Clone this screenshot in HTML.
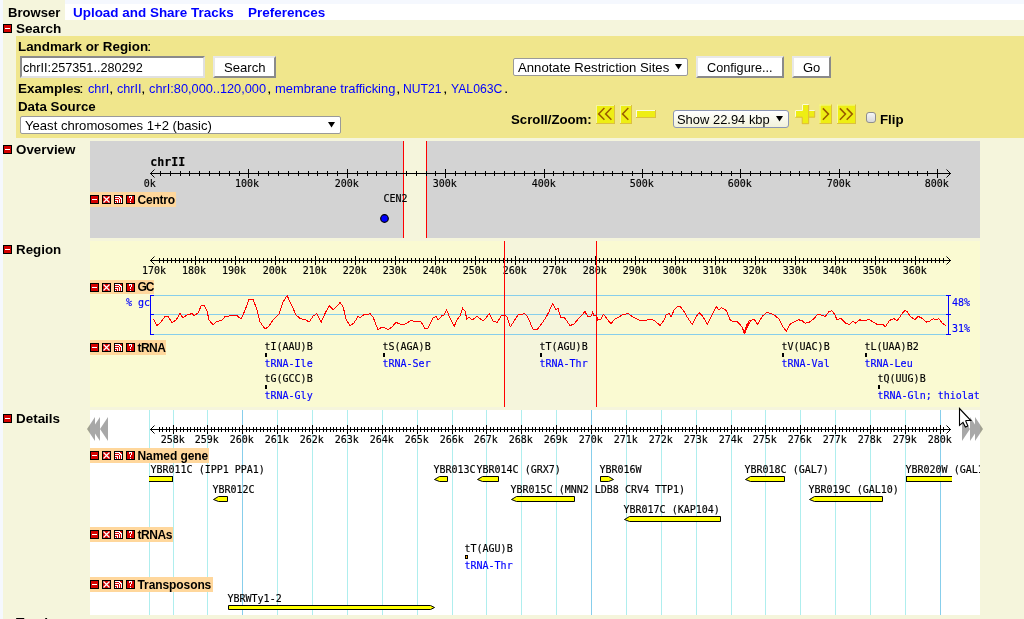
<!DOCTYPE html>
<html><head><meta charset="utf-8"><title>GBrowse</title>
<style>
html,body{margin:0;padding:0}
body{width:1024px;height:619px;overflow:hidden;position:relative;background:#f5f8fe;font-family:"Liberation Sans",Arial,sans-serif;font-size:13px;color:#000}
.abs,.ic,.tl,.tlt,.sec,span.t,div.p{position:absolute}
.ic{width:9px;height:9px;line-height:0}
.ic svg{display:block}
.tl{background:#ffd79c}
.tlt{font-weight:bold;font-size:12px;white-space:nowrap}
.sec{font-weight:bold;font-size:13.15px;line-height:15px;white-space:nowrap}
.t{white-space:nowrap;line-height:15px}
a{color:#0000ff;text-decoration:none}
.b,b{font-weight:bold;font-size:13.15px}
.btn{position:absolute;box-sizing:border-box;background:#fff;border:2px solid;border-color:#e8e8e8 #8a8a8a #8a8a8a #e8e8e8;font-size:13px;height:22px}
.sel{position:absolute;box-sizing:border-box;background:#fff;border:1px solid #9a9a9a;border-radius:2px;font-size:13px;line-height:16px;height:18px;padding-left:3.5px;white-space:nowrap}
.sel i{position:absolute;right:5px;top:0;font-style:normal;font-size:11px;letter-spacing:0}
svg text{font-family:"DejaVu Sans Mono","Liberation Mono",monospace;font-size:10px;stroke:currentColor;stroke-width:0.15px;fill:currentColor;color:#000}
</style></head><body><div id="w" style="position:absolute;left:0;top:0;width:1024px;height:619px;overflow:hidden;will-change:transform">

<div class="p" style="left:3px;top:0;width:1021px;height:619px;background:#f5f5dc"></div>
<div class="p" style="left:65px;top:0;width:959px;height:4px;background:#f5f8fe"></div>
<div class="p" style="left:65px;top:4px;width:959px;height:16px;background:#fff"></div>
<span class="t" style="left:7.73px;top:5px;font-size:13.5px;transform:scaleX(0.9676);transform-origin:0 0;font-weight:bold">Browser</span>
<span class="t" style="left:73.39px;top:5px;font-size:13.5px;transform:scaleX(0.9957);transform-origin:0 0;font-weight:bold;color:#0000ff">Upload and Share Tracks</span>
<span class="t" style="left:247.80px;top:5px;font-size:13.5px;transform:scaleX(0.9981);transform-origin:0 0;font-weight:bold;color:#0000ff">Preferences</span>
<span class="ic" style="left:3px;top:24px"><svg width="9" height="9" viewBox="0 0 9 9" shape-rendering="crispEdges"><rect x="0" y="0" width="9" height="9" fill="#000"/><rect x="1" y="1" width="7" height="7" fill="#d40000"/><rect x="2" y="4" width="5" height="1" fill="#fff"/></svg></span><span class="t" style="left:16.41px;top:21px;font-size:13.5px;transform:scaleX(1.0045);transform-origin:0 0;font-weight:bold">Search</span>
<div class="p" style="left:16px;top:36px;width:1008px;height:102px;background:#f0e68c"></div>
<span class="t" style="left:17.90px;top:39px;font-size:13.5px;transform:scaleX(0.9913);transform-origin:0 0;font-weight:bold">Landmark or Region</span>
<span class="t" style="left:147.16px;top:39px;font-size:13.5px;transform:scaleX(1.1670);transform-origin:0 0">:</span>
<div class="abs" style="position:absolute;left:20px;top:56px;width:185px;height:22px;box-sizing:border-box;background:#fff;border:2px solid;border-color:#8a8a8a #e0e0e0 #e0e0e0 #8a8a8a;"></div>
<span class="t" style="left:23.16px;top:60px;font-size:13.5px;transform:scaleX(0.9379);transform-origin:0 0">chrII:257351..280292</span>
<div class="btn" style="left:213px;top:56px;width:63px"></div>
<span class="t" style="left:224.00px;top:60px;font-size:13.5px;transform:scaleX(0.9713);transform-origin:0 0">Search</span>
<span class="t" style="left:17.90px;top:81px;font-size:13.5px;transform:scaleX(0.9971);transform-origin:0 0;font-weight:bold">Examples</span>
<span class="t" style="left:79.37px;top:81px;font-size:13.5px;transform:scaleX(1.2447);transform-origin:0 0">:</span>
<span class="t" style="left:88.16px;top:81px;font-size:13.5px;transform:scaleX(0.9427);transform-origin:0 0;color:#0000ff">chrI</span>
<span class="t" style="left:117.06px;top:81px;font-size:13.5px;transform:scaleX(0.9371);transform-origin:0 0;color:#0000ff">chrII</span>
<span class="t" style="left:149.26px;top:81px;font-size:13.5px;transform:scaleX(0.9450);transform-origin:0 0;color:#0000ff">chrI:80,000..120,000</span>
<span class="t" style="left:274.84px;top:81px;font-size:13.5px;transform:scaleX(0.9567);transform-origin:0 0;color:#0000ff">membrane trafficking</span>
<span class="t" style="left:403.01px;top:81px;font-size:13.5px;transform:scaleX(0.8977);transform-origin:0 0;color:#0000ff">NUT21</span>
<span class="t" style="left:450.73px;top:81px;font-size:13.5px;transform:scaleX(0.9038);transform-origin:0 0;color:#0000ff">YAL063C</span>
<span class="t" style="left:109.24px;top:81px;font-size:13.5px;transform:scaleX(1.2076);transform-origin:0 0">,</span>
<span class="t" style="left:141.44px;top:81px;font-size:13.5px;transform:scaleX(1.2076);transform-origin:0 0">,</span>
<span class="t" style="left:266.84px;top:81px;font-size:13.5px;transform:scaleX(1.2076);transform-origin:0 0">,</span>
<span class="t" style="left:395.54px;top:81px;font-size:13.5px;transform:scaleX(1.2076);transform-origin:0 0">,</span>
<span class="t" style="left:442.54px;top:81px;font-size:13.5px;transform:scaleX(1.2076);transform-origin:0 0">,</span>
<span class="t" style="left:503.56px;top:81px;font-size:13.5px;transform:scaleX(1.1670);transform-origin:0 0">.</span>
<span class="t" style="left:17.91px;top:99px;font-size:13.5px;transform:scaleX(0.9869);transform-origin:0 0;font-weight:bold">Data Source</span>
<div class="sel" style="left:20px;top:116px;width:321px"></div><svg style="position:absolute;left:327.5px;top:122px" width="7" height="6" viewBox="0 0 7 6"><path d="M0 0H7L3.5 5.6Z" fill="#000"/></svg>
<span class="t" style="left:24.61px;top:118px;font-size:13.5px;transform:scaleX(0.9698);transform-origin:0 0">Yeast chromosomes 1+2 (basic)</span>
<div class="sel" style="left:513px;top:58px;width:175px"></div><svg style="position:absolute;left:674.5px;top:64px" width="7" height="6" viewBox="0 0 7 6"><path d="M0 0H7L3.5 5.6Z" fill="#000"/></svg>
<span class="t" style="left:517.57px;top:60px;font-size:13.5px;transform:scaleX(0.9734);transform-origin:0 0">Annotate Restriction Sites</span>
<div class="btn" style="left:696px;top:56px;width:88px"></div>
<span class="t" style="left:706.96px;top:60px;font-size:13.5px;transform:scaleX(0.9386);transform-origin:0 0">Configure...</span>
<div class="btn" style="left:792px;top:56px;width:39px"></div>
<span class="t" style="left:802.85px;top:60px;font-size:13.5px;transform:scaleX(0.9605);transform-origin:0 0">Go</span>
<span class="t" style="left:510.92px;top:112px;font-size:13.5px;transform:scaleX(0.9788);transform-origin:0 0;font-weight:bold">Scroll/Zoom:</span>
<svg class="abs" style="position:absolute;left:595px;top:104px" width="70" height="21" viewBox="0 0 70 21"><rect x="1" y="1" width="19" height="19" fill="#eeee14"/><rect x="1" y="1" width="19" height="1" fill="#f6f6a0"/><rect x="1" y="1" width="1" height="19" fill="#f6f6a0"/><rect x="1" y="19" width="19" height="1" fill="#dcc040"/><rect x="19" y="1" width="1" height="19" fill="#dcc040"/><path d="M8.9 4.5L3.6 9.9L8.9 15.3M15.9 4.5L10.6 9.9L15.9 15.3" stroke="#9a5c00" stroke-width="1.5" fill="none" stroke-linecap="square"/><rect x="25" y="1" width="12" height="19" fill="#eeee14"/><rect x="25" y="1" width="12" height="1" fill="#f6f6a0"/><rect x="25" y="1" width="1" height="19" fill="#f6f6a0"/><rect x="25" y="19" width="12" height="1" fill="#dcc040"/><rect x="36" y="1" width="1" height="19" fill="#dcc040"/><path d="M32.8 4.5L27.5 9.9L32.8 15.3" stroke="#9a5c00" stroke-width="1.5" fill="none" stroke-linecap="square"/><rect x="41" y="6" width="20" height="8" fill="#eeee14"/><rect x="41" y="6" width="20" height="1" fill="#fdfde0"/><rect x="41" y="6" width="1" height="8" fill="#fdfde0"/><rect x="41" y="13" width="20" height="1" fill="#dcc040"/><rect x="60" y="6" width="1" height="8" fill="#dcc040"/></svg>
<div class="sel" style="left:673px;top:110px;width:116px;border-radius:3px;border-color:#8c96b4;background:linear-gradient(#ffffff,#f2f2da)"></div><svg style="position:absolute;left:775.7px;top:116px" width="7" height="6" viewBox="0 0 7 6"><path d="M0 0H7L3.5 5.6Z" fill="#000"/></svg>
<span class="t" style="left:677.01px;top:112px;font-size:13.5px;transform:scaleX(0.9578);transform-origin:0 0">Show 22.94 kbp</span>
<svg class="abs" style="position:absolute;left:795px;top:104px" width="62" height="21" viewBox="0 0 62 21"><rect x="0" y="6" width="20" height="7.5" fill="#eeee14"/><rect x="7" y="0" width="7" height="20" fill="#eeee14"/><path d="M0.5 13V6.5H7.5V0.5H14M14 6.5H20" stroke="#fbfbd8" stroke-width="1" fill="none"/><path d="M0.5 13.2H7.2V19.7H13.7V0.8M13.7 13.2H19.7V6.8" stroke="#dcb440" stroke-width="0.9" fill="none"/><rect x="24.5" y="0.5" width="12.5" height="19.5" fill="#eeee14"/><rect x="24.5" y="0.5" width="12.5" height="1" fill="#f6f6a0"/><rect x="24.5" y="0.5" width="1" height="19.5" fill="#f6f6a0"/><rect x="24.5" y="19.0" width="12.5" height="1" fill="#dcc040"/><rect x="36.0" y="0.5" width="1" height="19.5" fill="#dcc040"/><path d="M28.4 4.9L33.5 10.1L28.4 15.3" stroke="#9a5c00" stroke-width="1.5" fill="none" stroke-linecap="square"/><rect x="42" y="0.5" width="19" height="19.5" fill="#eeee14"/><rect x="42" y="0.5" width="19" height="1" fill="#f6f6a0"/><rect x="42" y="0.5" width="1" height="19.5" fill="#f6f6a0"/><rect x="42" y="19.0" width="19" height="1" fill="#dcc040"/><rect x="60" y="0.5" width="1" height="19.5" fill="#dcc040"/><path d="M45.4 4.9L50.5 10.1L45.4 15.3M52.2 4.9L57.3 10.1L52.2 15.3" stroke="#9a5c00" stroke-width="1.5" fill="none" stroke-linecap="square"/></svg>
<div class="abs" style="position:absolute;left:865.5px;top:112px;width:10.5px;height:10.5px;box-sizing:border-box;border:1px solid #8e8e8e;border-radius:3px;background:linear-gradient(#f6f6f6,#d8d8d8)"></div>
<span class="t" style="left:879.91px;top:112px;font-size:13.5px;transform:scaleX(0.9850);transform-origin:0 0;font-weight:bold">Flip</span>
<span class="ic" style="left:3px;top:145px"><svg width="9" height="9" viewBox="0 0 9 9" shape-rendering="crispEdges"><rect x="0" y="0" width="9" height="9" fill="#000"/><rect x="1" y="1" width="7" height="7" fill="#d40000"/><rect x="2" y="4" width="5" height="1" fill="#fff"/></svg></span><span class="t" style="left:16.25px;top:142px;font-size:13.5px;transform:scaleX(0.9897);transform-origin:0 0;font-weight:bold">Overview</span>
<svg class="abs" style="position:absolute;left:90px;top:141px" width="890" height="97" viewBox="90 141 890 97"><rect x="90" y="141" width="890" height="97" fill="#d3d3d3"/><rect x="404" y="141" width="22" height="97" fill="#f5f5dc"/><g shape-rendering="crispEdges"><rect x="403" y="141" width="1" height="97" fill="#ff0000"/><rect x="426" y="141" width="1" height="97" fill="#ff0000"/><rect x="150" y="173" width="801" height="1" fill="#000"/><rect x="160" y="171" width="1" height="5" fill="#000"/><rect x="170" y="171" width="1" height="5" fill="#000"/><rect x="180" y="171" width="1" height="5" fill="#000"/><rect x="189" y="171" width="1" height="5" fill="#000"/><rect x="199" y="171" width="1" height="5" fill="#000"/><rect x="209" y="171" width="1" height="5" fill="#000"/><rect x="219" y="171" width="1" height="5" fill="#000"/><rect x="229" y="171" width="1" height="5" fill="#000"/><rect x="239" y="171" width="1" height="5" fill="#000"/><rect x="248" y="169" width="1" height="9" fill="#000"/><rect x="258" y="171" width="1" height="5" fill="#000"/><rect x="268" y="171" width="1" height="5" fill="#000"/><rect x="278" y="171" width="1" height="5" fill="#000"/><rect x="288" y="171" width="1" height="5" fill="#000"/><rect x="298" y="171" width="1" height="5" fill="#000"/><rect x="308" y="171" width="1" height="5" fill="#000"/><rect x="317" y="171" width="1" height="5" fill="#000"/><rect x="327" y="171" width="1" height="5" fill="#000"/><rect x="337" y="171" width="1" height="5" fill="#000"/><rect x="347" y="169" width="1" height="9" fill="#000"/><rect x="357" y="171" width="1" height="5" fill="#000"/><rect x="367" y="171" width="1" height="5" fill="#000"/><rect x="376" y="171" width="1" height="5" fill="#000"/><rect x="386" y="171" width="1" height="5" fill="#000"/><rect x="396" y="171" width="1" height="5" fill="#000"/><rect x="406" y="171" width="1" height="5" fill="#000"/><rect x="416" y="171" width="1" height="5" fill="#000"/><rect x="426" y="171" width="1" height="5" fill="#000"/><rect x="435" y="171" width="1" height="5" fill="#000"/><rect x="445" y="169" width="1" height="9" fill="#000"/><rect x="455" y="171" width="1" height="5" fill="#000"/><rect x="465" y="171" width="1" height="5" fill="#000"/><rect x="475" y="171" width="1" height="5" fill="#000"/><rect x="485" y="171" width="1" height="5" fill="#000"/><rect x="494" y="171" width="1" height="5" fill="#000"/><rect x="504" y="171" width="1" height="5" fill="#000"/><rect x="514" y="171" width="1" height="5" fill="#000"/><rect x="524" y="171" width="1" height="5" fill="#000"/><rect x="534" y="171" width="1" height="5" fill="#000"/><rect x="544" y="169" width="1" height="9" fill="#000"/><rect x="553" y="171" width="1" height="5" fill="#000"/><rect x="563" y="171" width="1" height="5" fill="#000"/><rect x="573" y="171" width="1" height="5" fill="#000"/><rect x="583" y="171" width="1" height="5" fill="#000"/><rect x="593" y="171" width="1" height="5" fill="#000"/><rect x="603" y="171" width="1" height="5" fill="#000"/><rect x="612" y="171" width="1" height="5" fill="#000"/><rect x="622" y="171" width="1" height="5" fill="#000"/><rect x="632" y="171" width="1" height="5" fill="#000"/><rect x="642" y="169" width="1" height="9" fill="#000"/><rect x="652" y="171" width="1" height="5" fill="#000"/><rect x="662" y="171" width="1" height="5" fill="#000"/><rect x="672" y="171" width="1" height="5" fill="#000"/><rect x="681" y="171" width="1" height="5" fill="#000"/><rect x="691" y="171" width="1" height="5" fill="#000"/><rect x="701" y="171" width="1" height="5" fill="#000"/><rect x="711" y="171" width="1" height="5" fill="#000"/><rect x="721" y="171" width="1" height="5" fill="#000"/><rect x="731" y="171" width="1" height="5" fill="#000"/><rect x="740" y="169" width="1" height="9" fill="#000"/><rect x="750" y="171" width="1" height="5" fill="#000"/><rect x="760" y="171" width="1" height="5" fill="#000"/><rect x="770" y="171" width="1" height="5" fill="#000"/><rect x="780" y="171" width="1" height="5" fill="#000"/><rect x="790" y="171" width="1" height="5" fill="#000"/><rect x="799" y="171" width="1" height="5" fill="#000"/><rect x="809" y="171" width="1" height="5" fill="#000"/><rect x="819" y="171" width="1" height="5" fill="#000"/><rect x="829" y="171" width="1" height="5" fill="#000"/><rect x="839" y="169" width="1" height="9" fill="#000"/><rect x="849" y="171" width="1" height="5" fill="#000"/><rect x="858" y="171" width="1" height="5" fill="#000"/><rect x="868" y="171" width="1" height="5" fill="#000"/><rect x="878" y="171" width="1" height="5" fill="#000"/><rect x="888" y="171" width="1" height="5" fill="#000"/><rect x="898" y="171" width="1" height="5" fill="#000"/><rect x="908" y="171" width="1" height="5" fill="#000"/><rect x="917" y="171" width="1" height="5" fill="#000"/><rect x="927" y="171" width="1" height="5" fill="#000"/><rect x="937" y="169" width="1" height="9" fill="#000"/></g><path d="M154.5 169.5L150.5 173.5L154.5 177.5M946.5 169.5L950.5 173.5L946.5 177.5" stroke="#000" stroke-width="1" fill="none"/><text x="143.7" y="187">0k</text><text x="235.0" y="187">100k</text><text x="334.7" y="187">200k</text><text x="432.7" y="187">300k</text><text x="531.7" y="187">400k</text><text x="629.7" y="187">500k</text><text x="727.7" y="187">600k</text><text x="826.7" y="187">700k</text><text x="924.7" y="187">800k</text><text x="150.3" y="166" style="font-weight:bold;font-size:11.6px">chrII</text><text x="383.5" y="202">CEN2</text><circle cx="384.5" cy="218.5" r="3.8" fill="#0000ff" stroke="#000" stroke-width="1.2"/></svg>
<div class="tl" style="left:90px;top:192px;width:86px;height:15px"></div><span class="ic" style="left:90px;top:195px"><svg width="9" height="9" viewBox="0 0 9 9" shape-rendering="crispEdges"><rect x="0" y="0" width="9" height="9" fill="#000"/><rect x="1" y="1" width="7" height="7" fill="#d40000"/><rect x="2" y="4" width="5" height="1" fill="#fff"/></svg></span><span class="ic" style="left:102px;top:195px"><svg width="9" height="9" viewBox="0 0 9 9"><rect x="0" y="0" width="9" height="9" fill="#000"/><rect x="1" y="1" width="7" height="7" fill="#d40000"/><path d="M1.5 1.5L7.5 7.5M7.5 1.5L1.5 7.5" stroke="#fff" stroke-width="1.25" fill="none"/></svg></span><span class="ic" style="left:114px;top:195px"><svg width="9" height="9" viewBox="0 0 9 9" shape-rendering="crispEdges"><rect x="0" y="0" width="9" height="9" fill="#000"/><rect x="1" y="1" width="7" height="7" fill="#d40000"/><rect x="1" y="1" width="5" height="1" fill="#fff"/><rect x="5" y="2" width="2" height="1" fill="#fff"/><rect x="1" y="3" width="4" height="1" fill="#fff"/><rect x="6" y="3" width="2" height="1" fill="#fff"/><rect x="5" y="4" width="1" height="1" fill="#fff"/><rect x="7" y="4" width="1" height="1" fill="#fff"/><rect x="1" y="5" width="3" height="1" fill="#fff"/><rect x="5" y="5" width="1" height="1" fill="#fff"/><rect x="7" y="5" width="1" height="1" fill="#fff"/><rect x="3" y="6" width="1" height="1" fill="#fff"/><rect x="5" y="6" width="1" height="1" fill="#fff"/><rect x="7" y="6" width="1" height="1" fill="#fff"/><rect x="1" y="7" width="1" height="1" fill="#fff"/><rect x="3" y="7" width="1" height="1" fill="#fff"/><rect x="5" y="7" width="1" height="1" fill="#fff"/><rect x="7" y="7" width="1" height="1" fill="#fff"/></svg></span><span class="ic" style="left:126px;top:195px"><svg width="9" height="9" viewBox="0 0 9 9" shape-rendering="crispEdges"><rect x="0" y="0" width="9" height="9" fill="#000"/><rect x="1" y="1" width="7" height="7" fill="#d40000"/><rect x="3" y="1" width="3" height="1" fill="#fff"/><rect x="3" y="2" width="1" height="1" fill="#fff"/><rect x="5" y="2" width="1" height="1" fill="#fff"/><rect x="5" y="3" width="1" height="1" fill="#fff"/><rect x="4" y="4" width="1" height="1" fill="#fff"/><rect x="4" y="5" width="1" height="1" fill="#fff"/><rect x="4" y="7" width="1" height="1" fill="#fff"/></svg></span><span class="tlt" style="left:137.5px;top:193px;line-height:15px;letter-spacing:-0.228px">Centro</span>
<span class="ic" style="left:3px;top:245px"><svg width="9" height="9" viewBox="0 0 9 9" shape-rendering="crispEdges"><rect x="0" y="0" width="9" height="9" fill="#000"/><rect x="1" y="1" width="7" height="7" fill="#d40000"/><rect x="2" y="4" width="5" height="1" fill="#fff"/></svg></span><span class="t" style="left:15.91px;top:242px;font-size:13.5px;transform:scaleX(0.9885);transform-origin:0 0;font-weight:bold">Region</span>
<svg class="abs" style="position:absolute;left:90px;top:241px" width="890" height="166" viewBox="90 241 890 166"><rect x="90" y="241" width="890" height="166" fill="#fafad2"/><rect x="505" y="241" width="91" height="166" fill="#f5f5dc"/><g shape-rendering="crispEdges"><rect x="150" y="260" width="801" height="1" fill="#000"/><rect x="159" y="258" width="1" height="5" fill="#000"/><rect x="163" y="258" width="1" height="5" fill="#000"/><rect x="167" y="258" width="1" height="5" fill="#000"/><rect x="171" y="258" width="1" height="5" fill="#000"/><rect x="175" y="258" width="1" height="5" fill="#000"/><rect x="179" y="258" width="1" height="5" fill="#000"/><rect x="183" y="258" width="1" height="5" fill="#000"/><rect x="187" y="258" width="1" height="5" fill="#000"/><rect x="191" y="258" width="1" height="5" fill="#000"/><rect x="195" y="256" width="1" height="9" fill="#000"/><rect x="199" y="258" width="1" height="5" fill="#000"/><rect x="203" y="258" width="1" height="5" fill="#000"/><rect x="207" y="258" width="1" height="5" fill="#000"/><rect x="211" y="258" width="1" height="5" fill="#000"/><rect x="215" y="258" width="1" height="5" fill="#000"/><rect x="219" y="258" width="1" height="5" fill="#000"/><rect x="223" y="258" width="1" height="5" fill="#000"/><rect x="227" y="258" width="1" height="5" fill="#000"/><rect x="231" y="258" width="1" height="5" fill="#000"/><rect x="235" y="256" width="1" height="9" fill="#000"/><rect x="239" y="258" width="1" height="5" fill="#000"/><rect x="243" y="258" width="1" height="5" fill="#000"/><rect x="247" y="258" width="1" height="5" fill="#000"/><rect x="251" y="258" width="1" height="5" fill="#000"/><rect x="255" y="258" width="1" height="5" fill="#000"/><rect x="259" y="258" width="1" height="5" fill="#000"/><rect x="263" y="258" width="1" height="5" fill="#000"/><rect x="267" y="258" width="1" height="5" fill="#000"/><rect x="271" y="258" width="1" height="5" fill="#000"/><rect x="275" y="256" width="1" height="9" fill="#000"/><rect x="279" y="258" width="1" height="5" fill="#000"/><rect x="283" y="258" width="1" height="5" fill="#000"/><rect x="287" y="258" width="1" height="5" fill="#000"/><rect x="291" y="258" width="1" height="5" fill="#000"/><rect x="295" y="258" width="1" height="5" fill="#000"/><rect x="299" y="258" width="1" height="5" fill="#000"/><rect x="303" y="258" width="1" height="5" fill="#000"/><rect x="307" y="258" width="1" height="5" fill="#000"/><rect x="311" y="258" width="1" height="5" fill="#000"/><rect x="315" y="256" width="1" height="9" fill="#000"/><rect x="319" y="258" width="1" height="5" fill="#000"/><rect x="323" y="258" width="1" height="5" fill="#000"/><rect x="327" y="258" width="1" height="5" fill="#000"/><rect x="331" y="258" width="1" height="5" fill="#000"/><rect x="335" y="258" width="1" height="5" fill="#000"/><rect x="339" y="258" width="1" height="5" fill="#000"/><rect x="343" y="258" width="1" height="5" fill="#000"/><rect x="347" y="258" width="1" height="5" fill="#000"/><rect x="351" y="258" width="1" height="5" fill="#000"/><rect x="355" y="256" width="1" height="9" fill="#000"/><rect x="359" y="258" width="1" height="5" fill="#000"/><rect x="363" y="258" width="1" height="5" fill="#000"/><rect x="367" y="258" width="1" height="5" fill="#000"/><rect x="371" y="258" width="1" height="5" fill="#000"/><rect x="375" y="258" width="1" height="5" fill="#000"/><rect x="379" y="258" width="1" height="5" fill="#000"/><rect x="383" y="258" width="1" height="5" fill="#000"/><rect x="387" y="258" width="1" height="5" fill="#000"/><rect x="391" y="258" width="1" height="5" fill="#000"/><rect x="395" y="256" width="1" height="9" fill="#000"/><rect x="399" y="258" width="1" height="5" fill="#000"/><rect x="403" y="258" width="1" height="5" fill="#000"/><rect x="407" y="258" width="1" height="5" fill="#000"/><rect x="411" y="258" width="1" height="5" fill="#000"/><rect x="415" y="258" width="1" height="5" fill="#000"/><rect x="419" y="258" width="1" height="5" fill="#000"/><rect x="423" y="258" width="1" height="5" fill="#000"/><rect x="427" y="258" width="1" height="5" fill="#000"/><rect x="431" y="258" width="1" height="5" fill="#000"/><rect x="435" y="256" width="1" height="9" fill="#000"/><rect x="439" y="258" width="1" height="5" fill="#000"/><rect x="443" y="258" width="1" height="5" fill="#000"/><rect x="447" y="258" width="1" height="5" fill="#000"/><rect x="451" y="258" width="1" height="5" fill="#000"/><rect x="455" y="258" width="1" height="5" fill="#000"/><rect x="459" y="258" width="1" height="5" fill="#000"/><rect x="463" y="258" width="1" height="5" fill="#000"/><rect x="467" y="258" width="1" height="5" fill="#000"/><rect x="471" y="258" width="1" height="5" fill="#000"/><rect x="475" y="256" width="1" height="9" fill="#000"/><rect x="479" y="258" width="1" height="5" fill="#000"/><rect x="483" y="258" width="1" height="5" fill="#000"/><rect x="487" y="258" width="1" height="5" fill="#000"/><rect x="491" y="258" width="1" height="5" fill="#000"/><rect x="495" y="258" width="1" height="5" fill="#000"/><rect x="499" y="258" width="1" height="5" fill="#000"/><rect x="503" y="258" width="1" height="5" fill="#000"/><rect x="507" y="258" width="1" height="5" fill="#000"/><rect x="511" y="258" width="1" height="5" fill="#000"/><rect x="515" y="256" width="1" height="9" fill="#000"/><rect x="519" y="258" width="1" height="5" fill="#000"/><rect x="523" y="258" width="1" height="5" fill="#000"/><rect x="527" y="258" width="1" height="5" fill="#000"/><rect x="531" y="258" width="1" height="5" fill="#000"/><rect x="535" y="258" width="1" height="5" fill="#000"/><rect x="539" y="258" width="1" height="5" fill="#000"/><rect x="543" y="258" width="1" height="5" fill="#000"/><rect x="547" y="258" width="1" height="5" fill="#000"/><rect x="551" y="258" width="1" height="5" fill="#000"/><rect x="555" y="256" width="1" height="9" fill="#000"/><rect x="559" y="258" width="1" height="5" fill="#000"/><rect x="563" y="258" width="1" height="5" fill="#000"/><rect x="567" y="258" width="1" height="5" fill="#000"/><rect x="571" y="258" width="1" height="5" fill="#000"/><rect x="575" y="258" width="1" height="5" fill="#000"/><rect x="579" y="258" width="1" height="5" fill="#000"/><rect x="583" y="258" width="1" height="5" fill="#000"/><rect x="587" y="258" width="1" height="5" fill="#000"/><rect x="591" y="258" width="1" height="5" fill="#000"/><rect x="595" y="256" width="1" height="9" fill="#000"/><rect x="599" y="258" width="1" height="5" fill="#000"/><rect x="603" y="258" width="1" height="5" fill="#000"/><rect x="607" y="258" width="1" height="5" fill="#000"/><rect x="611" y="258" width="1" height="5" fill="#000"/><rect x="615" y="258" width="1" height="5" fill="#000"/><rect x="619" y="258" width="1" height="5" fill="#000"/><rect x="623" y="258" width="1" height="5" fill="#000"/><rect x="627" y="258" width="1" height="5" fill="#000"/><rect x="631" y="258" width="1" height="5" fill="#000"/><rect x="635" y="256" width="1" height="9" fill="#000"/><rect x="639" y="258" width="1" height="5" fill="#000"/><rect x="643" y="258" width="1" height="5" fill="#000"/><rect x="647" y="258" width="1" height="5" fill="#000"/><rect x="651" y="258" width="1" height="5" fill="#000"/><rect x="655" y="258" width="1" height="5" fill="#000"/><rect x="659" y="258" width="1" height="5" fill="#000"/><rect x="663" y="258" width="1" height="5" fill="#000"/><rect x="667" y="258" width="1" height="5" fill="#000"/><rect x="671" y="258" width="1" height="5" fill="#000"/><rect x="675" y="256" width="1" height="9" fill="#000"/><rect x="679" y="258" width="1" height="5" fill="#000"/><rect x="683" y="258" width="1" height="5" fill="#000"/><rect x="687" y="258" width="1" height="5" fill="#000"/><rect x="691" y="258" width="1" height="5" fill="#000"/><rect x="695" y="258" width="1" height="5" fill="#000"/><rect x="699" y="258" width="1" height="5" fill="#000"/><rect x="703" y="258" width="1" height="5" fill="#000"/><rect x="707" y="258" width="1" height="5" fill="#000"/><rect x="711" y="258" width="1" height="5" fill="#000"/><rect x="715" y="256" width="1" height="9" fill="#000"/><rect x="719" y="258" width="1" height="5" fill="#000"/><rect x="723" y="258" width="1" height="5" fill="#000"/><rect x="727" y="258" width="1" height="5" fill="#000"/><rect x="731" y="258" width="1" height="5" fill="#000"/><rect x="735" y="258" width="1" height="5" fill="#000"/><rect x="739" y="258" width="1" height="5" fill="#000"/><rect x="743" y="258" width="1" height="5" fill="#000"/><rect x="747" y="258" width="1" height="5" fill="#000"/><rect x="751" y="258" width="1" height="5" fill="#000"/><rect x="755" y="256" width="1" height="9" fill="#000"/><rect x="759" y="258" width="1" height="5" fill="#000"/><rect x="763" y="258" width="1" height="5" fill="#000"/><rect x="767" y="258" width="1" height="5" fill="#000"/><rect x="771" y="258" width="1" height="5" fill="#000"/><rect x="775" y="258" width="1" height="5" fill="#000"/><rect x="779" y="258" width="1" height="5" fill="#000"/><rect x="783" y="258" width="1" height="5" fill="#000"/><rect x="787" y="258" width="1" height="5" fill="#000"/><rect x="791" y="258" width="1" height="5" fill="#000"/><rect x="795" y="256" width="1" height="9" fill="#000"/><rect x="799" y="258" width="1" height="5" fill="#000"/><rect x="803" y="258" width="1" height="5" fill="#000"/><rect x="807" y="258" width="1" height="5" fill="#000"/><rect x="811" y="258" width="1" height="5" fill="#000"/><rect x="815" y="258" width="1" height="5" fill="#000"/><rect x="819" y="258" width="1" height="5" fill="#000"/><rect x="823" y="258" width="1" height="5" fill="#000"/><rect x="827" y="258" width="1" height="5" fill="#000"/><rect x="831" y="258" width="1" height="5" fill="#000"/><rect x="835" y="256" width="1" height="9" fill="#000"/><rect x="839" y="258" width="1" height="5" fill="#000"/><rect x="843" y="258" width="1" height="5" fill="#000"/><rect x="847" y="258" width="1" height="5" fill="#000"/><rect x="851" y="258" width="1" height="5" fill="#000"/><rect x="855" y="258" width="1" height="5" fill="#000"/><rect x="859" y="258" width="1" height="5" fill="#000"/><rect x="863" y="258" width="1" height="5" fill="#000"/><rect x="867" y="258" width="1" height="5" fill="#000"/><rect x="871" y="258" width="1" height="5" fill="#000"/><rect x="875" y="256" width="1" height="9" fill="#000"/><rect x="879" y="258" width="1" height="5" fill="#000"/><rect x="883" y="258" width="1" height="5" fill="#000"/><rect x="887" y="258" width="1" height="5" fill="#000"/><rect x="891" y="258" width="1" height="5" fill="#000"/><rect x="895" y="258" width="1" height="5" fill="#000"/><rect x="899" y="258" width="1" height="5" fill="#000"/><rect x="903" y="258" width="1" height="5" fill="#000"/><rect x="907" y="258" width="1" height="5" fill="#000"/><rect x="911" y="258" width="1" height="5" fill="#000"/><rect x="915" y="256" width="1" height="9" fill="#000"/><rect x="919" y="258" width="1" height="5" fill="#000"/><rect x="923" y="258" width="1" height="5" fill="#000"/><rect x="927" y="258" width="1" height="5" fill="#000"/><rect x="931" y="258" width="1" height="5" fill="#000"/><rect x="935" y="258" width="1" height="5" fill="#000"/><rect x="939" y="258" width="1" height="5" fill="#000"/><rect x="943" y="258" width="1" height="5" fill="#000"/><rect x="151" y="295" width="797" height="1" fill="#87ceeb"/><rect x="151" y="314" width="797" height="1" fill="#87ceeb"/><rect x="151" y="334" width="797" height="1" fill="#87ceeb"/><rect x="150" y="295" width="1" height="40" fill="#0000ff"/><rect x="150" y="295" width="4" height="1" fill="#0000ff"/><rect x="150" y="334" width="4" height="1" fill="#0000ff"/><rect x="150" y="314" width="4" height="1" fill="#0000ff"/><rect x="948" y="295" width="1" height="40" fill="#0000ff"/><rect x="946" y="295" width="5" height="1" fill="#0000ff"/><rect x="946" y="334" width="5" height="1" fill="#0000ff"/><rect x="946" y="314" width="5" height="1" fill="#0000ff"/></g><path d="M154.5 256.5L150.5 260.5L154.5 264.5M946.5 256.5L950.5 260.5L946.5 264.5" stroke="#000" stroke-width="1" fill="none"/><text x="142.0" y="274">170k</text><text x="182.0" y="274">180k</text><text x="222.0" y="274">190k</text><text x="262.7" y="274">200k</text><text x="302.7" y="274">210k</text><text x="342.7" y="274">220k</text><text x="382.7" y="274">230k</text><text x="422.7" y="274">240k</text><text x="462.7" y="274">250k</text><text x="502.7" y="274">260k</text><text x="542.7" y="274">270k</text><text x="582.7" y="274">280k</text><text x="622.7" y="274">290k</text><text x="662.7" y="274">300k</text><text x="702.7" y="274">310k</text><text x="742.7" y="274">320k</text><text x="782.7" y="274">330k</text><text x="822.7" y="274">340k</text><text x="862.7" y="274">350k</text><text x="902.7" y="274">360k</text><polyline fill="none" stroke="#ff0000" stroke-width="1" shape-rendering="crispEdges" points="153.4,319.0 157.0,325.6 161.0,322.0 165.0,316.4 168.0,316.0 172.0,323.0 176.0,320.0 180.0,313.6 183.0,318.0 187.0,315.0 192.0,313.6 194.0,315.6 198.1,313.0 201.1,306.0 204.1,305.6 206.7,310.0 209.1,320.0 213.1,325.0 216.1,322.0 222.1,320.0 225.1,316.4 233.1,315.6 236.1,315.0 241.1,319.0 245.1,310.0 249.1,299.0 253.1,299.6 257.1,310.0 260.1,322.0 265.1,329.0 269.1,326.0 273.1,320.0 279.1,314.0 283.1,302.0 287.1,295.6 290.1,302.0 296.1,315.0 300.2,318.6 305.2,319.6 309.2,322.0 313.2,316.0 316.8,313.6 321.2,322.0 325.2,313.0 329.2,305.6 333.2,310.0 337.2,306.0 340.2,302.4 343.2,307.0 346.2,320.0 350.0,325.6 350.0,326.0 354.0,323.0 358.0,316.4 360.0,318.0 364.0,314.4 367.0,315.0 370.0,313.6 373.0,317.0 378.0,329.6 382.0,327.0 385.0,328.0 388.0,329.6 392.0,327.0 396.0,322.4 400.1,324.0 403.1,325.0 407.1,323.0 411.1,320.4 414.1,321.6 417.1,321.0 421.1,322.0 425.1,329.0 428.1,328.0 433.1,318.0 436.1,316.4 438.1,320.0 442.1,315.6 444.1,315.0 446.7,310.0 449.1,316.0 454.1,326.4 457.1,320.0 460.1,315.6 462.7,308.4 465.1,311.0 466.7,319.0 469.1,317.0 472.1,320.0 477.1,316.4 483.1,321.0 486.1,318.0 489.1,313.6 493.1,321.0 497.1,322.4 501.2,316.0 504.6,315.0 507.2,317.0 510.2,327.0 514.2,321.0 518.2,314.4 521.2,315.0 524.2,313.6 527.2,316.0 533.2,329.6 537.2,329.6 542.2,323.0 546.2,317.0 550.0,310.0 549.0,311.0 552.6,303.6 556.0,310.0 558.0,308.4 561.0,318.0 564.0,317.0 570.0,325.6 574.0,324.0 579.0,318.0 585.0,311.6 587.4,316.0 591.0,316.0 592.6,312.4 594.0,315.6 596.7,315.0 597.5,320.0 601.1,319.0 603.5,314.4 607.1,319.0 611.1,324.0 614.1,319.6 617.1,318.0 622.1,315.0 628.1,313.6 633.1,317.0 639.1,320.0 642.1,321.0 647.1,320.0 651.1,319.0 655.1,321.0 660.1,325.6 664.1,320.0 666.1,315.0 669.1,313.6 671.1,317.0 674.1,310.0 677.1,307.0 680.1,306.4 683.1,310.0 687.1,317.0 692.1,324.4 696.1,317.0 699.2,312.4 703.2,317.0 707.2,324.4 711.2,317.0 716.2,306.4 718.8,310.0 721.2,307.6 726.2,310.4 730.2,320.0 733.2,322.0 737.2,321.6 742.2,327.0 744.2,333.0 747.2,324.0 750.0,322.0 745.0,332.5 749.1,321.0 754.2,319.4 757.6,324.4 762.2,316.4 766.8,312.5 771.4,313.4 776.0,316.4 779.4,319.4 782.9,326.7 786.3,331.3 789.8,324.4 794.3,321.7 798.9,319.8 802.4,321.0 805.1,323.3 809.3,322.1 813.8,318.7 818.0,314.1 821.9,315.2 825.3,316.4 828.8,311.8 831.7,310.7 834.5,314.1 836.8,319.4 841.4,318.7 846.0,323.3 849.4,324.4 852.9,321.0 855.2,323.3 859.7,319.8 864.3,321.0 868.9,319.4 873.5,322.1 878.1,324.9 882.7,324.0 885.4,326.7 889.6,320.3 894.2,318.7 896.9,321.0 901.1,315.2 904.5,310.7 906.8,311.1 910.2,316.4 914.8,319.8 918.3,316.4 922.9,318.7 926.3,322.1 929.7,321.0 933.2,318.7 936.6,319.8 938.9,318.7 942.4,323.3 945.8,325.6"/><text x="126" y="306" style="color:#0000ff">% gc</text><text x="952" y="306" style="color:#0000ff">48%</text><text x="952" y="332" style="color:#0000ff">31%</text><text x="264.5" y="350">tI(AAU)B</text><rect x="265" y="353" width="2" height="4" fill="#000" shape-rendering="crispEdges"/><text x="264.5" y="367" style="color:#0000ff">tRNA-Ile</text><text x="264.5" y="382">tG(GCC)B</text><rect x="265" y="385" width="2" height="4" fill="#000" shape-rendering="crispEdges"/><text x="264.5" y="399" style="color:#0000ff">tRNA-Gly</text><text x="382.5" y="350">tS(AGA)B</text><rect x="383" y="353" width="2" height="4" fill="#000" shape-rendering="crispEdges"/><text x="382.5" y="367" style="color:#0000ff">tRNA-Ser</text><text x="539.5" y="350">tT(AGU)B</text><rect x="540" y="353" width="2" height="4" fill="#000" shape-rendering="crispEdges"/><text x="539.5" y="367" style="color:#0000ff">tRNA-Thr</text><text x="781.5" y="350">tV(UAC)B</text><rect x="782" y="353" width="2" height="4" fill="#000" shape-rendering="crispEdges"/><text x="781.5" y="367" style="color:#0000ff">tRNA-Val</text><text x="864.5" y="350">tL(UAA)B2</text><rect x="865" y="353" width="2" height="4" fill="#000" shape-rendering="crispEdges"/><text x="864.5" y="367" style="color:#0000ff">tRNA-Leu</text><text x="877.5" y="382">tQ(UUG)B</text><rect x="878" y="385" width="2" height="4" fill="#000" shape-rendering="crispEdges"/><text x="877.5" y="399" style="color:#0000ff">tRNA-Gln; thiolat</text><g shape-rendering="crispEdges"><rect x="504" y="241" width="1" height="166" fill="#ff0000"/><rect x="596" y="241" width="1" height="166" fill="#ff0000"/></g></svg>
<div class="tl" style="left:90px;top:280px;width:64px;height:14px"></div><span class="ic" style="left:90px;top:283px"><svg width="9" height="9" viewBox="0 0 9 9" shape-rendering="crispEdges"><rect x="0" y="0" width="9" height="9" fill="#000"/><rect x="1" y="1" width="7" height="7" fill="#d40000"/><rect x="2" y="4" width="5" height="1" fill="#fff"/></svg></span><span class="ic" style="left:102px;top:283px"><svg width="9" height="9" viewBox="0 0 9 9"><rect x="0" y="0" width="9" height="9" fill="#000"/><rect x="1" y="1" width="7" height="7" fill="#d40000"/><path d="M1.5 1.5L7.5 7.5M7.5 1.5L1.5 7.5" stroke="#fff" stroke-width="1.25" fill="none"/></svg></span><span class="ic" style="left:114px;top:283px"><svg width="9" height="9" viewBox="0 0 9 9" shape-rendering="crispEdges"><rect x="0" y="0" width="9" height="9" fill="#000"/><rect x="1" y="1" width="7" height="7" fill="#d40000"/><rect x="1" y="1" width="5" height="1" fill="#fff"/><rect x="5" y="2" width="2" height="1" fill="#fff"/><rect x="1" y="3" width="4" height="1" fill="#fff"/><rect x="6" y="3" width="2" height="1" fill="#fff"/><rect x="5" y="4" width="1" height="1" fill="#fff"/><rect x="7" y="4" width="1" height="1" fill="#fff"/><rect x="1" y="5" width="3" height="1" fill="#fff"/><rect x="5" y="5" width="1" height="1" fill="#fff"/><rect x="7" y="5" width="1" height="1" fill="#fff"/><rect x="3" y="6" width="1" height="1" fill="#fff"/><rect x="5" y="6" width="1" height="1" fill="#fff"/><rect x="7" y="6" width="1" height="1" fill="#fff"/><rect x="1" y="7" width="1" height="1" fill="#fff"/><rect x="3" y="7" width="1" height="1" fill="#fff"/><rect x="5" y="7" width="1" height="1" fill="#fff"/><rect x="7" y="7" width="1" height="1" fill="#fff"/></svg></span><span class="ic" style="left:126px;top:283px"><svg width="9" height="9" viewBox="0 0 9 9" shape-rendering="crispEdges"><rect x="0" y="0" width="9" height="9" fill="#000"/><rect x="1" y="1" width="7" height="7" fill="#d40000"/><rect x="3" y="1" width="3" height="1" fill="#fff"/><rect x="3" y="2" width="1" height="1" fill="#fff"/><rect x="5" y="2" width="1" height="1" fill="#fff"/><rect x="5" y="3" width="1" height="1" fill="#fff"/><rect x="4" y="4" width="1" height="1" fill="#fff"/><rect x="4" y="5" width="1" height="1" fill="#fff"/><rect x="4" y="7" width="1" height="1" fill="#fff"/></svg></span><span class="tlt" style="left:137.5px;top:280px;line-height:14px;letter-spacing:-1.200px">GC</span>
<div class="tl" style="left:90px;top:340px;width:76px;height:15px"></div><span class="ic" style="left:90px;top:343px"><svg width="9" height="9" viewBox="0 0 9 9" shape-rendering="crispEdges"><rect x="0" y="0" width="9" height="9" fill="#000"/><rect x="1" y="1" width="7" height="7" fill="#d40000"/><rect x="2" y="4" width="5" height="1" fill="#fff"/></svg></span><span class="ic" style="left:102px;top:343px"><svg width="9" height="9" viewBox="0 0 9 9"><rect x="0" y="0" width="9" height="9" fill="#000"/><rect x="1" y="1" width="7" height="7" fill="#d40000"/><path d="M1.5 1.5L7.5 7.5M7.5 1.5L1.5 7.5" stroke="#fff" stroke-width="1.25" fill="none"/></svg></span><span class="ic" style="left:114px;top:343px"><svg width="9" height="9" viewBox="0 0 9 9" shape-rendering="crispEdges"><rect x="0" y="0" width="9" height="9" fill="#000"/><rect x="1" y="1" width="7" height="7" fill="#d40000"/><rect x="1" y="1" width="5" height="1" fill="#fff"/><rect x="5" y="2" width="2" height="1" fill="#fff"/><rect x="1" y="3" width="4" height="1" fill="#fff"/><rect x="6" y="3" width="2" height="1" fill="#fff"/><rect x="5" y="4" width="1" height="1" fill="#fff"/><rect x="7" y="4" width="1" height="1" fill="#fff"/><rect x="1" y="5" width="3" height="1" fill="#fff"/><rect x="5" y="5" width="1" height="1" fill="#fff"/><rect x="7" y="5" width="1" height="1" fill="#fff"/><rect x="3" y="6" width="1" height="1" fill="#fff"/><rect x="5" y="6" width="1" height="1" fill="#fff"/><rect x="7" y="6" width="1" height="1" fill="#fff"/><rect x="1" y="7" width="1" height="1" fill="#fff"/><rect x="3" y="7" width="1" height="1" fill="#fff"/><rect x="5" y="7" width="1" height="1" fill="#fff"/><rect x="7" y="7" width="1" height="1" fill="#fff"/></svg></span><span class="ic" style="left:126px;top:343px"><svg width="9" height="9" viewBox="0 0 9 9" shape-rendering="crispEdges"><rect x="0" y="0" width="9" height="9" fill="#000"/><rect x="1" y="1" width="7" height="7" fill="#d40000"/><rect x="3" y="1" width="3" height="1" fill="#fff"/><rect x="3" y="2" width="1" height="1" fill="#fff"/><rect x="5" y="2" width="1" height="1" fill="#fff"/><rect x="5" y="3" width="1" height="1" fill="#fff"/><rect x="4" y="4" width="1" height="1" fill="#fff"/><rect x="4" y="5" width="1" height="1" fill="#fff"/><rect x="4" y="7" width="1" height="1" fill="#fff"/></svg></span><span class="tlt" style="left:137.5px;top:341px;line-height:15px;letter-spacing:-0.549px">tRNA</span>
<span class="ic" style="left:3px;top:414px"><svg width="9" height="9" viewBox="0 0 9 9" shape-rendering="crispEdges"><rect x="0" y="0" width="9" height="9" fill="#000"/><rect x="1" y="1" width="7" height="7" fill="#d40000"/><rect x="2" y="4" width="5" height="1" fill="#fff"/></svg></span><span class="t" style="left:15.90px;top:411px;font-size:13.5px;transform:scaleX(0.9950);transform-origin:0 0;font-weight:bold">Details</span>
<svg class="abs" style="position:absolute;left:87px;top:406px" width="937" height="213" viewBox="87 406 937 213"><rect x="90" y="410" width="890" height="205" fill="#ffffff"/><g shape-rendering="crispEdges"><rect x="149" y="410" width="1" height="205" fill="#afeeee"/><rect x="173" y="410" width="1" height="205" fill="#afeeee"/><rect x="207" y="410" width="1" height="205" fill="#afeeee"/><rect x="242" y="410" width="1" height="205" fill="#87ceeb"/><rect x="277" y="410" width="1" height="205" fill="#afeeee"/><rect x="312" y="410" width="1" height="205" fill="#afeeee"/><rect x="347" y="410" width="1" height="205" fill="#afeeee"/><rect x="382" y="410" width="1" height="205" fill="#afeeee"/><rect x="417" y="410" width="1" height="205" fill="#afeeee"/><rect x="452" y="410" width="1" height="205" fill="#afeeee"/><rect x="486" y="410" width="1" height="205" fill="#afeeee"/><rect x="521" y="410" width="1" height="205" fill="#afeeee"/><rect x="556" y="410" width="1" height="205" fill="#afeeee"/><rect x="591" y="410" width="1" height="205" fill="#87ceeb"/><rect x="626" y="410" width="1" height="205" fill="#afeeee"/><rect x="661" y="410" width="1" height="205" fill="#afeeee"/><rect x="696" y="410" width="1" height="205" fill="#afeeee"/><rect x="731" y="410" width="1" height="205" fill="#afeeee"/><rect x="765" y="410" width="1" height="205" fill="#afeeee"/><rect x="800" y="410" width="1" height="205" fill="#afeeee"/><rect x="835" y="410" width="1" height="205" fill="#afeeee"/><rect x="870" y="410" width="1" height="205" fill="#afeeee"/><rect x="905" y="410" width="1" height="205" fill="#afeeee"/><rect x="940" y="410" width="1" height="205" fill="#87ceeb"/><rect x="150" y="429" width="801" height="1" fill="#000"/><rect x="159" y="427" width="1" height="5" fill="#000"/><rect x="162" y="427" width="1" height="5" fill="#000"/><rect x="166" y="427" width="1" height="5" fill="#000"/><rect x="169" y="427" width="1" height="5" fill="#000"/><rect x="173" y="425" width="1" height="9" fill="#000"/><rect x="176" y="427" width="1" height="5" fill="#000"/><rect x="180" y="427" width="1" height="5" fill="#000"/><rect x="183" y="427" width="1" height="5" fill="#000"/><rect x="187" y="427" width="1" height="5" fill="#000"/><rect x="190" y="427" width="1" height="5" fill="#000"/><rect x="194" y="427" width="1" height="5" fill="#000"/><rect x="197" y="427" width="1" height="5" fill="#000"/><rect x="200" y="427" width="1" height="5" fill="#000"/><rect x="204" y="427" width="1" height="5" fill="#000"/><rect x="207" y="425" width="1" height="9" fill="#000"/><rect x="211" y="427" width="1" height="5" fill="#000"/><rect x="214" y="427" width="1" height="5" fill="#000"/><rect x="218" y="427" width="1" height="5" fill="#000"/><rect x="221" y="427" width="1" height="5" fill="#000"/><rect x="225" y="427" width="1" height="5" fill="#000"/><rect x="228" y="427" width="1" height="5" fill="#000"/><rect x="232" y="427" width="1" height="5" fill="#000"/><rect x="235" y="427" width="1" height="5" fill="#000"/><rect x="239" y="427" width="1" height="5" fill="#000"/><rect x="242" y="425" width="1" height="9" fill="#000"/><rect x="246" y="427" width="1" height="5" fill="#000"/><rect x="249" y="427" width="1" height="5" fill="#000"/><rect x="253" y="427" width="1" height="5" fill="#000"/><rect x="256" y="427" width="1" height="5" fill="#000"/><rect x="260" y="427" width="1" height="5" fill="#000"/><rect x="263" y="427" width="1" height="5" fill="#000"/><rect x="267" y="427" width="1" height="5" fill="#000"/><rect x="270" y="427" width="1" height="5" fill="#000"/><rect x="274" y="427" width="1" height="5" fill="#000"/><rect x="277" y="425" width="1" height="9" fill="#000"/><rect x="281" y="427" width="1" height="5" fill="#000"/><rect x="284" y="427" width="1" height="5" fill="#000"/><rect x="288" y="427" width="1" height="5" fill="#000"/><rect x="291" y="427" width="1" height="5" fill="#000"/><rect x="295" y="427" width="1" height="5" fill="#000"/><rect x="298" y="427" width="1" height="5" fill="#000"/><rect x="302" y="427" width="1" height="5" fill="#000"/><rect x="305" y="427" width="1" height="5" fill="#000"/><rect x="309" y="427" width="1" height="5" fill="#000"/><rect x="312" y="425" width="1" height="9" fill="#000"/><rect x="316" y="427" width="1" height="5" fill="#000"/><rect x="319" y="427" width="1" height="5" fill="#000"/><rect x="323" y="427" width="1" height="5" fill="#000"/><rect x="326" y="427" width="1" height="5" fill="#000"/><rect x="330" y="427" width="1" height="5" fill="#000"/><rect x="333" y="427" width="1" height="5" fill="#000"/><rect x="336" y="427" width="1" height="5" fill="#000"/><rect x="340" y="427" width="1" height="5" fill="#000"/><rect x="343" y="427" width="1" height="5" fill="#000"/><rect x="347" y="425" width="1" height="9" fill="#000"/><rect x="350" y="427" width="1" height="5" fill="#000"/><rect x="354" y="427" width="1" height="5" fill="#000"/><rect x="357" y="427" width="1" height="5" fill="#000"/><rect x="361" y="427" width="1" height="5" fill="#000"/><rect x="364" y="427" width="1" height="5" fill="#000"/><rect x="368" y="427" width="1" height="5" fill="#000"/><rect x="371" y="427" width="1" height="5" fill="#000"/><rect x="375" y="427" width="1" height="5" fill="#000"/><rect x="378" y="427" width="1" height="5" fill="#000"/><rect x="382" y="425" width="1" height="9" fill="#000"/><rect x="385" y="427" width="1" height="5" fill="#000"/><rect x="389" y="427" width="1" height="5" fill="#000"/><rect x="392" y="427" width="1" height="5" fill="#000"/><rect x="396" y="427" width="1" height="5" fill="#000"/><rect x="399" y="427" width="1" height="5" fill="#000"/><rect x="403" y="427" width="1" height="5" fill="#000"/><rect x="406" y="427" width="1" height="5" fill="#000"/><rect x="410" y="427" width="1" height="5" fill="#000"/><rect x="413" y="427" width="1" height="5" fill="#000"/><rect x="417" y="425" width="1" height="9" fill="#000"/><rect x="420" y="427" width="1" height="5" fill="#000"/><rect x="424" y="427" width="1" height="5" fill="#000"/><rect x="427" y="427" width="1" height="5" fill="#000"/><rect x="431" y="427" width="1" height="5" fill="#000"/><rect x="434" y="427" width="1" height="5" fill="#000"/><rect x="438" y="427" width="1" height="5" fill="#000"/><rect x="441" y="427" width="1" height="5" fill="#000"/><rect x="445" y="427" width="1" height="5" fill="#000"/><rect x="448" y="427" width="1" height="5" fill="#000"/><rect x="452" y="425" width="1" height="9" fill="#000"/><rect x="455" y="427" width="1" height="5" fill="#000"/><rect x="459" y="427" width="1" height="5" fill="#000"/><rect x="462" y="427" width="1" height="5" fill="#000"/><rect x="466" y="427" width="1" height="5" fill="#000"/><rect x="469" y="427" width="1" height="5" fill="#000"/><rect x="472" y="427" width="1" height="5" fill="#000"/><rect x="476" y="427" width="1" height="5" fill="#000"/><rect x="479" y="427" width="1" height="5" fill="#000"/><rect x="483" y="427" width="1" height="5" fill="#000"/><rect x="486" y="425" width="1" height="9" fill="#000"/><rect x="490" y="427" width="1" height="5" fill="#000"/><rect x="493" y="427" width="1" height="5" fill="#000"/><rect x="497" y="427" width="1" height="5" fill="#000"/><rect x="500" y="427" width="1" height="5" fill="#000"/><rect x="504" y="427" width="1" height="5" fill="#000"/><rect x="507" y="427" width="1" height="5" fill="#000"/><rect x="511" y="427" width="1" height="5" fill="#000"/><rect x="514" y="427" width="1" height="5" fill="#000"/><rect x="518" y="427" width="1" height="5" fill="#000"/><rect x="521" y="425" width="1" height="9" fill="#000"/><rect x="525" y="427" width="1" height="5" fill="#000"/><rect x="528" y="427" width="1" height="5" fill="#000"/><rect x="532" y="427" width="1" height="5" fill="#000"/><rect x="535" y="427" width="1" height="5" fill="#000"/><rect x="539" y="427" width="1" height="5" fill="#000"/><rect x="542" y="427" width="1" height="5" fill="#000"/><rect x="546" y="427" width="1" height="5" fill="#000"/><rect x="549" y="427" width="1" height="5" fill="#000"/><rect x="553" y="427" width="1" height="5" fill="#000"/><rect x="556" y="425" width="1" height="9" fill="#000"/><rect x="560" y="427" width="1" height="5" fill="#000"/><rect x="563" y="427" width="1" height="5" fill="#000"/><rect x="567" y="427" width="1" height="5" fill="#000"/><rect x="570" y="427" width="1" height="5" fill="#000"/><rect x="574" y="427" width="1" height="5" fill="#000"/><rect x="577" y="427" width="1" height="5" fill="#000"/><rect x="581" y="427" width="1" height="5" fill="#000"/><rect x="584" y="427" width="1" height="5" fill="#000"/><rect x="588" y="427" width="1" height="5" fill="#000"/><rect x="591" y="425" width="1" height="9" fill="#000"/><rect x="595" y="427" width="1" height="5" fill="#000"/><rect x="598" y="427" width="1" height="5" fill="#000"/><rect x="602" y="427" width="1" height="5" fill="#000"/><rect x="605" y="427" width="1" height="5" fill="#000"/><rect x="608" y="427" width="1" height="5" fill="#000"/><rect x="612" y="427" width="1" height="5" fill="#000"/><rect x="615" y="427" width="1" height="5" fill="#000"/><rect x="619" y="427" width="1" height="5" fill="#000"/><rect x="622" y="427" width="1" height="5" fill="#000"/><rect x="626" y="425" width="1" height="9" fill="#000"/><rect x="629" y="427" width="1" height="5" fill="#000"/><rect x="633" y="427" width="1" height="5" fill="#000"/><rect x="636" y="427" width="1" height="5" fill="#000"/><rect x="640" y="427" width="1" height="5" fill="#000"/><rect x="643" y="427" width="1" height="5" fill="#000"/><rect x="647" y="427" width="1" height="5" fill="#000"/><rect x="650" y="427" width="1" height="5" fill="#000"/><rect x="654" y="427" width="1" height="5" fill="#000"/><rect x="657" y="427" width="1" height="5" fill="#000"/><rect x="661" y="425" width="1" height="9" fill="#000"/><rect x="664" y="427" width="1" height="5" fill="#000"/><rect x="668" y="427" width="1" height="5" fill="#000"/><rect x="671" y="427" width="1" height="5" fill="#000"/><rect x="675" y="427" width="1" height="5" fill="#000"/><rect x="678" y="427" width="1" height="5" fill="#000"/><rect x="682" y="427" width="1" height="5" fill="#000"/><rect x="685" y="427" width="1" height="5" fill="#000"/><rect x="689" y="427" width="1" height="5" fill="#000"/><rect x="692" y="427" width="1" height="5" fill="#000"/><rect x="696" y="425" width="1" height="9" fill="#000"/><rect x="699" y="427" width="1" height="5" fill="#000"/><rect x="703" y="427" width="1" height="5" fill="#000"/><rect x="706" y="427" width="1" height="5" fill="#000"/><rect x="710" y="427" width="1" height="5" fill="#000"/><rect x="713" y="427" width="1" height="5" fill="#000"/><rect x="717" y="427" width="1" height="5" fill="#000"/><rect x="720" y="427" width="1" height="5" fill="#000"/><rect x="724" y="427" width="1" height="5" fill="#000"/><rect x="727" y="427" width="1" height="5" fill="#000"/><rect x="731" y="425" width="1" height="9" fill="#000"/><rect x="734" y="427" width="1" height="5" fill="#000"/><rect x="737" y="427" width="1" height="5" fill="#000"/><rect x="741" y="427" width="1" height="5" fill="#000"/><rect x="744" y="427" width="1" height="5" fill="#000"/><rect x="748" y="427" width="1" height="5" fill="#000"/><rect x="751" y="427" width="1" height="5" fill="#000"/><rect x="755" y="427" width="1" height="5" fill="#000"/><rect x="758" y="427" width="1" height="5" fill="#000"/><rect x="762" y="427" width="1" height="5" fill="#000"/><rect x="765" y="425" width="1" height="9" fill="#000"/><rect x="769" y="427" width="1" height="5" fill="#000"/><rect x="772" y="427" width="1" height="5" fill="#000"/><rect x="776" y="427" width="1" height="5" fill="#000"/><rect x="779" y="427" width="1" height="5" fill="#000"/><rect x="783" y="427" width="1" height="5" fill="#000"/><rect x="786" y="427" width="1" height="5" fill="#000"/><rect x="790" y="427" width="1" height="5" fill="#000"/><rect x="793" y="427" width="1" height="5" fill="#000"/><rect x="797" y="427" width="1" height="5" fill="#000"/><rect x="800" y="425" width="1" height="9" fill="#000"/><rect x="804" y="427" width="1" height="5" fill="#000"/><rect x="807" y="427" width="1" height="5" fill="#000"/><rect x="811" y="427" width="1" height="5" fill="#000"/><rect x="814" y="427" width="1" height="5" fill="#000"/><rect x="818" y="427" width="1" height="5" fill="#000"/><rect x="821" y="427" width="1" height="5" fill="#000"/><rect x="825" y="427" width="1" height="5" fill="#000"/><rect x="828" y="427" width="1" height="5" fill="#000"/><rect x="832" y="427" width="1" height="5" fill="#000"/><rect x="835" y="425" width="1" height="9" fill="#000"/><rect x="839" y="427" width="1" height="5" fill="#000"/><rect x="842" y="427" width="1" height="5" fill="#000"/><rect x="846" y="427" width="1" height="5" fill="#000"/><rect x="849" y="427" width="1" height="5" fill="#000"/><rect x="853" y="427" width="1" height="5" fill="#000"/><rect x="856" y="427" width="1" height="5" fill="#000"/><rect x="860" y="427" width="1" height="5" fill="#000"/><rect x="863" y="427" width="1" height="5" fill="#000"/><rect x="867" y="427" width="1" height="5" fill="#000"/><rect x="870" y="425" width="1" height="9" fill="#000"/><rect x="873" y="427" width="1" height="5" fill="#000"/><rect x="877" y="427" width="1" height="5" fill="#000"/><rect x="880" y="427" width="1" height="5" fill="#000"/><rect x="884" y="427" width="1" height="5" fill="#000"/><rect x="887" y="427" width="1" height="5" fill="#000"/><rect x="891" y="427" width="1" height="5" fill="#000"/><rect x="894" y="427" width="1" height="5" fill="#000"/><rect x="898" y="427" width="1" height="5" fill="#000"/><rect x="901" y="427" width="1" height="5" fill="#000"/><rect x="905" y="425" width="1" height="9" fill="#000"/><rect x="908" y="427" width="1" height="5" fill="#000"/><rect x="912" y="427" width="1" height="5" fill="#000"/><rect x="915" y="427" width="1" height="5" fill="#000"/><rect x="919" y="427" width="1" height="5" fill="#000"/><rect x="922" y="427" width="1" height="5" fill="#000"/><rect x="926" y="427" width="1" height="5" fill="#000"/><rect x="929" y="427" width="1" height="5" fill="#000"/><rect x="933" y="427" width="1" height="5" fill="#000"/><rect x="936" y="427" width="1" height="5" fill="#000"/><rect x="940" y="425" width="1" height="9" fill="#000"/><rect x="943" y="427" width="1" height="5" fill="#000"/></g><path d="M154.5 425.5L150.5 429.5L154.5 433.5M946.5 425.5L950.5 429.5L946.5 433.5" stroke="#000" stroke-width="1" fill="none"/><text x="160.7" y="443">258k</text><text x="194.7" y="443">259k</text><text x="229.7" y="443">260k</text><text x="264.7" y="443">261k</text><text x="299.7" y="443">262k</text><text x="334.7" y="443">263k</text><text x="369.7" y="443">264k</text><text x="404.7" y="443">265k</text><text x="439.7" y="443">266k</text><text x="473.7" y="443">267k</text><text x="508.7" y="443">268k</text><text x="543.7" y="443">269k</text><text x="578.7" y="443">270k</text><text x="613.7" y="443">271k</text><text x="648.7" y="443">272k</text><text x="683.7" y="443">273k</text><text x="718.7" y="443">274k</text><text x="752.7" y="443">275k</text><text x="787.7" y="443">276k</text><text x="822.7" y="443">277k</text><text x="857.7" y="443">278k</text><text x="892.7" y="443">279k</text><text x="927.7" y="443">280k</text><path d="M87 429L95 417V441ZM92 429L100 417V441ZM100 429L108 417V441Z" fill="#000" fill-opacity="0.34"/><path d="M983 429L975 417V441ZM978 429L970 417V441ZM970 429L962 417V441Z" fill="#000" fill-opacity="0.34"/><path d="M959.5 408.5V425.3L963 422.4L965.4 427L967.9 426L965.8 421.3L966 420.5H970.8Z" fill="#fff" stroke="#000" stroke-width="1.1" stroke-linejoin="miter"/><text x="150.5" y="473">YBR011C (IPP1 PPA1)</text><rect x="149" y="476" width="23" height="6" fill="#ffff00" shape-rendering="crispEdges"/><path d="M149 476.5H172.5V481.5H149" fill="none" stroke="#000" stroke-width="1" shape-rendering="crispEdges"/><text x="433.5" y="473">YBR013C</text><path d="M434.5 479.5L439.5 476.5H447.5V481.5H439.5Z" fill="#ffff00" stroke="#000" stroke-width="1"/><text x="476.5" y="473">YBR014C (GRX7)</text><path d="M477.5 479.5L482.5 476.5H498.5V481.5H482.5Z" fill="#ffff00" stroke="#000" stroke-width="1"/><text x="599.5" y="473">YBR016W</text><path d="M600.5 476.5H608.5L613.5 479.5L608.5 481.5H600.5Z" fill="#ffff00" stroke="#000" stroke-width="1"/><text x="744.5" y="473">YBR018C (GAL7)</text><path d="M745.5 479.5L750.5 476.5H784.5V481.5H750.5Z" fill="#ffff00" stroke="#000" stroke-width="1"/><text x="905.5" y="473">YBR020W (GAL1</text><rect x="906" y="476" width="46" height="6" fill="#ffff00" shape-rendering="crispEdges"/><path d="M952 476.5H906.5V481.5H952" fill="none" stroke="#000" stroke-width="1" shape-rendering="crispEdges"/><text x="212.5" y="493">YBR012C</text><path d="M213.5 499.5L218.5 496.5H227.5V501.5H218.5Z" fill="#ffff00" stroke="#000" stroke-width="1"/><text x="510.5" y="493">YBR015C (MNN2 LDB8 CRV4 TTP1)</text><path d="M511.5 499.5L516.5 496.5H574.5V501.5H516.5Z" fill="#ffff00" stroke="#000" stroke-width="1"/><text x="808.5" y="493">YBR019C (GAL10)</text><path d="M809.5 499.5L814.5 496.5H882.5V501.5H814.5Z" fill="#ffff00" stroke="#000" stroke-width="1"/><text x="623.5" y="513">YBR017C (KAP104)</text><path d="M624.5 519.5L629.5 516.5H720.5V521.5H629.5Z" fill="#ffff00" stroke="#000" stroke-width="1"/><text x="464.5" y="552">tT(AGU)B</text><rect x="465" y="555" width="3" height="4" fill="#000" shape-rendering="crispEdges"/><rect x="466" y="556" width="1" height="2" fill="#ffa500" shape-rendering="crispEdges"/><text x="464.5" y="569" style="color:#0000ff">tRNA-Thr</text><text x="227.5" y="602">YBRWTy1-2</text><path d="M228.5 605.5H430.5L434.5 607.5L430.5 609.5H228.5Z" fill="#ffff00" stroke="#000" stroke-width="1"/><rect x="980" y="410" width="44" height="205" fill="#f5f5dc"/><path d="M980 424.5L983 429L980 433.5Z" fill="#000" fill-opacity="0.34"/></svg>
<div class="tl" style="left:90px;top:448px;width:119px;height:15px"></div><span class="ic" style="left:90px;top:451px"><svg width="9" height="9" viewBox="0 0 9 9" shape-rendering="crispEdges"><rect x="0" y="0" width="9" height="9" fill="#000"/><rect x="1" y="1" width="7" height="7" fill="#d40000"/><rect x="2" y="4" width="5" height="1" fill="#fff"/></svg></span><span class="ic" style="left:102px;top:451px"><svg width="9" height="9" viewBox="0 0 9 9"><rect x="0" y="0" width="9" height="9" fill="#000"/><rect x="1" y="1" width="7" height="7" fill="#d40000"/><path d="M1.5 1.5L7.5 7.5M7.5 1.5L1.5 7.5" stroke="#fff" stroke-width="1.25" fill="none"/></svg></span><span class="ic" style="left:114px;top:451px"><svg width="9" height="9" viewBox="0 0 9 9" shape-rendering="crispEdges"><rect x="0" y="0" width="9" height="9" fill="#000"/><rect x="1" y="1" width="7" height="7" fill="#d40000"/><rect x="1" y="1" width="5" height="1" fill="#fff"/><rect x="5" y="2" width="2" height="1" fill="#fff"/><rect x="1" y="3" width="4" height="1" fill="#fff"/><rect x="6" y="3" width="2" height="1" fill="#fff"/><rect x="5" y="4" width="1" height="1" fill="#fff"/><rect x="7" y="4" width="1" height="1" fill="#fff"/><rect x="1" y="5" width="3" height="1" fill="#fff"/><rect x="5" y="5" width="1" height="1" fill="#fff"/><rect x="7" y="5" width="1" height="1" fill="#fff"/><rect x="3" y="6" width="1" height="1" fill="#fff"/><rect x="5" y="6" width="1" height="1" fill="#fff"/><rect x="7" y="6" width="1" height="1" fill="#fff"/><rect x="1" y="7" width="1" height="1" fill="#fff"/><rect x="3" y="7" width="1" height="1" fill="#fff"/><rect x="5" y="7" width="1" height="1" fill="#fff"/><rect x="7" y="7" width="1" height="1" fill="#fff"/></svg></span><span class="ic" style="left:126px;top:451px"><svg width="9" height="9" viewBox="0 0 9 9" shape-rendering="crispEdges"><rect x="0" y="0" width="9" height="9" fill="#000"/><rect x="1" y="1" width="7" height="7" fill="#d40000"/><rect x="3" y="1" width="3" height="1" fill="#fff"/><rect x="3" y="2" width="1" height="1" fill="#fff"/><rect x="5" y="2" width="1" height="1" fill="#fff"/><rect x="5" y="3" width="1" height="1" fill="#fff"/><rect x="4" y="4" width="1" height="1" fill="#fff"/><rect x="4" y="5" width="1" height="1" fill="#fff"/><rect x="4" y="7" width="1" height="1" fill="#fff"/></svg></span><span class="tlt" style="left:137.5px;top:449px;line-height:15px;letter-spacing:-0.066px">Named gene</span>
<div class="tl" style="left:90px;top:527px;width:83px;height:15px"></div><span class="ic" style="left:90px;top:530px"><svg width="9" height="9" viewBox="0 0 9 9" shape-rendering="crispEdges"><rect x="0" y="0" width="9" height="9" fill="#000"/><rect x="1" y="1" width="7" height="7" fill="#d40000"/><rect x="2" y="4" width="5" height="1" fill="#fff"/></svg></span><span class="ic" style="left:102px;top:530px"><svg width="9" height="9" viewBox="0 0 9 9"><rect x="0" y="0" width="9" height="9" fill="#000"/><rect x="1" y="1" width="7" height="7" fill="#d40000"/><path d="M1.5 1.5L7.5 7.5M7.5 1.5L1.5 7.5" stroke="#fff" stroke-width="1.25" fill="none"/></svg></span><span class="ic" style="left:114px;top:530px"><svg width="9" height="9" viewBox="0 0 9 9" shape-rendering="crispEdges"><rect x="0" y="0" width="9" height="9" fill="#000"/><rect x="1" y="1" width="7" height="7" fill="#d40000"/><rect x="1" y="1" width="5" height="1" fill="#fff"/><rect x="5" y="2" width="2" height="1" fill="#fff"/><rect x="1" y="3" width="4" height="1" fill="#fff"/><rect x="6" y="3" width="2" height="1" fill="#fff"/><rect x="5" y="4" width="1" height="1" fill="#fff"/><rect x="7" y="4" width="1" height="1" fill="#fff"/><rect x="1" y="5" width="3" height="1" fill="#fff"/><rect x="5" y="5" width="1" height="1" fill="#fff"/><rect x="7" y="5" width="1" height="1" fill="#fff"/><rect x="3" y="6" width="1" height="1" fill="#fff"/><rect x="5" y="6" width="1" height="1" fill="#fff"/><rect x="7" y="6" width="1" height="1" fill="#fff"/><rect x="1" y="7" width="1" height="1" fill="#fff"/><rect x="3" y="7" width="1" height="1" fill="#fff"/><rect x="5" y="7" width="1" height="1" fill="#fff"/><rect x="7" y="7" width="1" height="1" fill="#fff"/></svg></span><span class="ic" style="left:126px;top:530px"><svg width="9" height="9" viewBox="0 0 9 9" shape-rendering="crispEdges"><rect x="0" y="0" width="9" height="9" fill="#000"/><rect x="1" y="1" width="7" height="7" fill="#d40000"/><rect x="3" y="1" width="3" height="1" fill="#fff"/><rect x="3" y="2" width="1" height="1" fill="#fff"/><rect x="5" y="2" width="1" height="1" fill="#fff"/><rect x="5" y="3" width="1" height="1" fill="#fff"/><rect x="4" y="4" width="1" height="1" fill="#fff"/><rect x="4" y="5" width="1" height="1" fill="#fff"/><rect x="4" y="7" width="1" height="1" fill="#fff"/></svg></span><span class="tlt" style="left:137.5px;top:528px;line-height:15px;letter-spacing:-0.454px">tRNAs</span>
<div class="tl" style="left:90px;top:577px;width:123px;height:15px"></div><span class="ic" style="left:90px;top:580px"><svg width="9" height="9" viewBox="0 0 9 9" shape-rendering="crispEdges"><rect x="0" y="0" width="9" height="9" fill="#000"/><rect x="1" y="1" width="7" height="7" fill="#d40000"/><rect x="2" y="4" width="5" height="1" fill="#fff"/></svg></span><span class="ic" style="left:102px;top:580px"><svg width="9" height="9" viewBox="0 0 9 9"><rect x="0" y="0" width="9" height="9" fill="#000"/><rect x="1" y="1" width="7" height="7" fill="#d40000"/><path d="M1.5 1.5L7.5 7.5M7.5 1.5L1.5 7.5" stroke="#fff" stroke-width="1.25" fill="none"/></svg></span><span class="ic" style="left:114px;top:580px"><svg width="9" height="9" viewBox="0 0 9 9" shape-rendering="crispEdges"><rect x="0" y="0" width="9" height="9" fill="#000"/><rect x="1" y="1" width="7" height="7" fill="#d40000"/><rect x="1" y="1" width="5" height="1" fill="#fff"/><rect x="5" y="2" width="2" height="1" fill="#fff"/><rect x="1" y="3" width="4" height="1" fill="#fff"/><rect x="6" y="3" width="2" height="1" fill="#fff"/><rect x="5" y="4" width="1" height="1" fill="#fff"/><rect x="7" y="4" width="1" height="1" fill="#fff"/><rect x="1" y="5" width="3" height="1" fill="#fff"/><rect x="5" y="5" width="1" height="1" fill="#fff"/><rect x="7" y="5" width="1" height="1" fill="#fff"/><rect x="3" y="6" width="1" height="1" fill="#fff"/><rect x="5" y="6" width="1" height="1" fill="#fff"/><rect x="7" y="6" width="1" height="1" fill="#fff"/><rect x="1" y="7" width="1" height="1" fill="#fff"/><rect x="3" y="7" width="1" height="1" fill="#fff"/><rect x="5" y="7" width="1" height="1" fill="#fff"/><rect x="7" y="7" width="1" height="1" fill="#fff"/></svg></span><span class="ic" style="left:126px;top:580px"><svg width="9" height="9" viewBox="0 0 9 9" shape-rendering="crispEdges"><rect x="0" y="0" width="9" height="9" fill="#000"/><rect x="1" y="1" width="7" height="7" fill="#d40000"/><rect x="3" y="1" width="3" height="1" fill="#fff"/><rect x="3" y="2" width="1" height="1" fill="#fff"/><rect x="5" y="2" width="1" height="1" fill="#fff"/><rect x="5" y="3" width="1" height="1" fill="#fff"/><rect x="4" y="4" width="1" height="1" fill="#fff"/><rect x="4" y="5" width="1" height="1" fill="#fff"/><rect x="4" y="7" width="1" height="1" fill="#fff"/></svg></span><span class="tlt" style="left:137.5px;top:578px;line-height:15px;letter-spacing:-0.089px">Transposons</span>
<span class="t" style="left:15.75px;top:615px;font-size:13.5px;transform:scaleX(1.0157);transform-origin:0 0;font-weight:bold">Tracks</span>
</div></body></html>
